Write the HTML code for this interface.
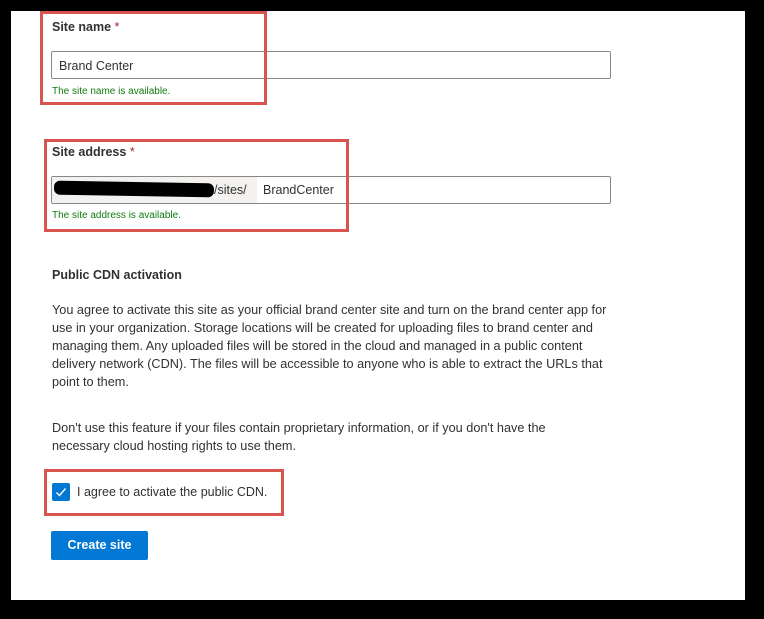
<!DOCTYPE html>
<html><head><style>
body{margin:0;width:764px;height:619px;background:#000;position:relative;overflow:hidden;font-family:"Liberation Sans",sans-serif;color:#323130}
.p{position:absolute;left:11px;top:11px;width:734px;height:589px;background:#fff}
.a{position:absolute}
.red{position:absolute;border:3px solid #d9534f;box-sizing:border-box}
.lbl{font-size:12.5px;font-weight:bold;color:#323130}
.lbl span{color:#a4262c;font-weight:normal}
.inp{position:absolute;border:1px solid #8a8886;border-radius:2px;box-sizing:border-box;background:#fff;font-size:12.5px}
.ok{font-size:10px;color:#107c10}
.txt{font-size:12.7px;line-height:18px;color:#323130;white-space:nowrap}
</style></head><body>
<div class="p"></div>
<div class="a lbl" style="left:52px;top:20px">Site name <span>*</span></div>
<div class="inp" style="left:51px;top:51px;width:560px;height:28px;padding:7px 0 0 7px">Brand Center</div>
<div class="a ok" style="left:52px;top:86px">The site name is available.</div>
<div class="red" style="left:40px;top:11px;width:227px;height:94px"></div>

<div class="a lbl" style="left:52px;top:145px">Site address <span>*</span></div>
<div class="inp" style="left:51px;top:176px;width:560px;height:28px">
 <div class="a" style="left:0;top:0;width:205px;height:26px;background:#f3f2f1"></div>
 <div class="a" style="left:2px;top:5px;width:160px;height:14px;background:#000;border-radius:6px;transform:rotate(1deg)"></div>
 <div class="a" style="left:162px;top:6px">/sites/</div>
 <div class="a" style="left:211px;top:6px">BrandCenter</div>
</div>
<div class="a ok" style="left:52px;top:210px">The site address is available.</div>
<div class="red" style="left:44px;top:139px;width:305px;height:93px"></div>

<div class="a lbl" style="left:52px;top:268px;font-weight:bold">Public CDN activation</div>
<div class="a txt" style="left:52px;top:301px">You agree to activate this site as your official brand center site and turn on the brand center app for<br>use in your organization. Storage locations will be created for uploading files to brand center and<br>managing them. Any uploaded files will be stored in the cloud and managed in a public content<br>delivery network (CDN). The files will be accessible to anyone who is able to extract the URLs that<br>point to them.</div>
<div class="a txt" style="left:52px;top:419px">Don't use this feature if your files contain proprietary information, or if you don't have the<br>necessary cloud hosting rights to use them.</div>

<div class="a" style="left:52px;top:483px;width:18px;height:18px;background:#0078d4;border-radius:2px">
<svg width="18" height="18" viewBox="0 0 18 18"><path d="M4.5 9.5l3 3 6-7" stroke="#fff" stroke-width="1.4" fill="none"/></svg></div>
<div class="a" style="left:77px;top:485px;font-size:12.5px">I agree to activate the public CDN.</div>
<div class="red" style="left:44px;top:469px;width:240px;height:47px"></div>

<div class="a" style="left:51px;top:531px;width:97px;height:29px;background:#0078d4;border-radius:2px;color:#fff;font-size:12.5px;font-weight:bold;text-align:center;line-height:29px">Create site</div>
</body></html>
